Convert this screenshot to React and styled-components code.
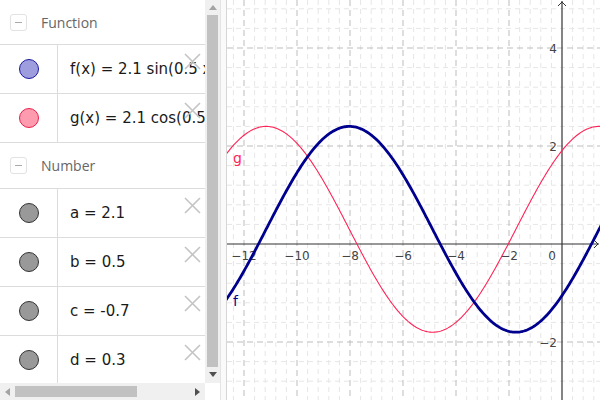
import React from "react";
import styled, { createGlobalStyle } from "styled-components";

const GlobalStyle = createGlobalStyle`
  html, body {
    margin: 0;
    padding: 0;
    overflow: hidden;
    background: #fff;
  }
`;

const Layout = styled.div`
  width: 600px;
  height: 400px;
  display: flex;
  font-family: "DejaVu Sans", sans-serif;
`;

const AlgebraPanel = styled.div`
  width: 220px;
  height: 400px;
  display: grid;
  grid-template-columns: 205px 15px;
  grid-template-rows: 383px 17px;
  flex-shrink: 0;
`;

const List = styled.div`
  overflow: hidden;
  display: flex;
  flex-direction: column;
`;

const GroupHeader = styled.div`
  height: ${(p) => p.height}px;
  flex-shrink: 0;
  display: flex;
  align-items: center;
  gap: 14px;
  padding-left: 10px;
  border-bottom: 1px solid #dcdcdc;
  box-sizing: border-box;
  color: #666;
  font-family: "Open Sans", sans-serif;
  font-size: 14px;
`;

const Collapse = styled.div`
  width: 15px;
  height: 15px;
  border: 1px solid #e2e2e2;
  border-radius: 3px;
  display: flex;
  align-items: center;
  justify-content: center;
  &::after {
    content: "";
    width: 7px;
    height: 1px;
    background: #aaa;
  }
`;

const Row = styled.div`
  position: relative;
  height: 49px;
  flex-shrink: 0;
  display: flex;
  border-bottom: 1px solid #dcdcdc;
  box-sizing: border-box;
`;

const MarkerCell = styled.div`
  width: 57px;
  flex-shrink: 0;
  border-right: 1px solid #dcdcdc;
  display: flex;
  align-items: center;
  justify-content: center;
`;

const Marker = styled.div`
  width: 18px;
  height: 18px;
  border-radius: 50%;
  background: ${(p) => p.fill};
  border: 1px solid ${(p) => p.stroke};
`;

const Expression = styled.div`
  display: flex;
  align-items: center;
  padding-left: 12px;
  white-space: nowrap;
  font-size: 15px;
  color: #1a1a1a;
`;

const DeleteButton = styled.svg`
  position: absolute;
  top: 8px;
  right: 4px;
`;

const VScroll = styled.div`
  background: #f0f0f0;
  display: flex;
  flex-direction: column;
  align-items: center;
`;

const HScroll = styled.div`
  background: #f0f0f0;
  display: flex;
  align-items: center;
`;

const ArrowBox = styled.div`
  width: 15px;
  height: 15px;
  flex-shrink: 0;
  display: flex;
  align-items: center;
  justify-content: center;
`;

const VThumb = styled.div`
  width: 11px;
  height: 352px;
  background: #c1c1c1;
`;

const HThumb = styled.div`
  height: 11px;
  width: 122px;
  background: #c1c1c1;
`;

const HSpacer = styled.div`
  flex: 1;
`;

const Corner = styled.div`
  background: #fff;
`;

const Splitter = styled.div`
  width: 5px;
  flex-shrink: 0;
  border-left: 1px solid #e4e4e4;
  border-right: 1px solid #d6d6d6;
  background: #fafafa;
`;

const GraphView = styled.div`
  flex: 1;
  height: 400px;
  background: #fff;
`;

const Triangle = ({ dir, color }) => {
  const pts = {
    up: "0,5 4,0 8,5",
    down: "0,0 8,0 4,5",
    left: "5,0 5,8 0,4",
    right: "0,0 0,8 5,4",
  }[dir];
  const vertical = dir === "up" || dir === "down";
  return (
    <svg width={vertical ? 8 : 5} height={vertical ? 5 : 8}>
      <polygon points={pts} fill={color} />
    </svg>
  );
};

const CloseIcon = () => (
  <DeleteButton width="17" height="17" viewBox="0 0 17 17">
    <path d="M1 1 L16 16 M16 1 L1 16" stroke="#c4c4c4" strokeWidth="1.6" />
  </DeleteButton>
);

const functions = [
  { expr: "f(x) = 2.1 sin(0.5 x - 0.7) + 0.3", fill: "#9e9ede", stroke: "#1a1aa0" },
  { expr: "g(x) = 2.1 cos(0.5 x - 0.7) + 0.3", fill: "#ff9bae", stroke: "#e8204d" },
];

const numbers = ["a = 2.1", "b = 0.5", "c = -0.7", "d = 0.3"];

const ItemRow = ({ expr, fill, stroke }) => (
  <Row>
    <MarkerCell>
      <Marker fill={fill} stroke={stroke} />
    </MarkerCell>
    <Expression>{expr}</Expression>
    <CloseIcon />
  </Row>
);

// graph coordinate system
const W = 373;
const H = 400;
const OX = 335;
const OY = 244;
const SX = 26.5;
const SY = 49;
const px = (x) => OX + x * SX;
const py = (y) => OY - y * SY;

const range = (from, to, step) => {
  const out = [];
  for (let v = from; v <= to + 1e-9; v += step) out.push(Math.round(v * 10) / 10);
  return out;
};

const curve = (fn) => {
  let d = "";
  for (let i = -2; i <= W + 2; i += 1) {
    const x = (i - OX) / SX;
    d += `${i === -2 ? "M" : "L"}${i} ${py(fn(x)).toFixed(2)} `;
  }
  return d;
};

const f = (x) => 2.1 * Math.sin(0.5 * x - 0.7) + 0.3;
const g = (x) => 2.1 * Math.cos(0.5 * x - 0.7) + 0.3;

const Graph = () => {
  const xs = range(-14, 2, 0.4);
  const ys = range(-4, 6, 0.4);
  const isMajor = (v) => Math.abs(v / 2 - Math.round(v / 2)) < 1e-6;
  return (
    <svg width={W} height={H} style={{ display: "block" }}>
      {xs.filter((v) => !isMajor(v)).map((v) => (
        <line key={"mx" + v} x1={px(v)} x2={px(v)} y1={0} y2={H} stroke="#e6e6e6" strokeDasharray="5 4" />
      ))}
      {ys.filter((v) => !isMajor(v)).map((v) => (
        <line key={"my" + v} y1={py(v)} y2={py(v)} x1={0} x2={W} stroke="#e6e6e6" strokeDasharray="5 4" />
      ))}
      {xs.filter((v) => isMajor(v) && v !== 0).map((v) => (
        <line key={"Mx" + v} x1={px(v)} x2={px(v)} y1={0} y2={H} stroke="#bdbdbd" strokeDasharray="6 4" />
      ))}
      {ys.filter((v) => isMajor(v) && v !== 0).map((v) => (
        <line key={"My" + v} y1={py(v)} y2={py(v)} x1={0} x2={W} stroke="#bdbdbd" strokeDasharray="6 4" />
      ))}

      <line x1={0} x2={W - 1} y1={OY} y2={OY} stroke="#333" strokeWidth="1.2" />
      <line x1={OX} x2={OX} y1={1} y2={H} stroke="#333" strokeWidth="1.2" />
      <path d={`M${OX - 4} ${6} L${OX} 2 L${OX + 4} 6`} fill="none" stroke="#333" />
      <path d={`M${W - 6} ${OY - 4} L${W - 2} ${OY} L${W - 6} ${OY + 4}`} fill="none" stroke="#333" />

      <g fontFamily="DejaVu Sans, sans-serif" fontSize="12" fill="#444">
        {[-12, -10, -8, -6, -4, -2].map((v) => (
          <text key={"lx" + v} x={px(v)} y={OY + 16} textAnchor="middle">
            {"\u2212" + Math.abs(v)}
          </text>
        ))}
        <text x={OX - 6} y={OY + 16} textAnchor="end">0</text>
        {[4, 2, -2].map((v) => (
          <text key={"ly" + v} x={OX - 5} y={py(v) + 5} textAnchor="end">
            {v < 0 ? "\u2212" + Math.abs(v) : v}
          </text>
        ))}
      </g>

      <path d={curve(g)} fill="none" stroke="#ff2457" strokeWidth="1.1" />
      <path d={curve(f)} fill="none" stroke="#00008f" strokeWidth="2.8" />

      <text x={6} y={163} fontFamily="DejaVu Sans, sans-serif" fontSize="14" fill="#ff2457">g</text>
      <text x={6} y={306} fontFamily="DejaVu Sans, sans-serif" fontSize="14" fill="#00008f">f</text>
    </svg>
  );
};

export default function App() {
  return (
    <>
      <GlobalStyle />
      <Layout>
        <AlgebraPanel>
          <List>
            <GroupHeader height={45}>
              <Collapse />
              Function
            </GroupHeader>
            {functions.map((item) => (
              <ItemRow key={item.expr} {...item} />
            ))}
            <GroupHeader height={46}>
              <Collapse />
              Number
            </GroupHeader>
            {numbers.map((expr) => (
              <ItemRow key={expr} expr={expr} fill="#999" stroke="#333" />
            ))}
          </List>
          <VScroll>
            <ArrowBox>
              <Triangle dir="up" color="#a3a3a3" />
            </ArrowBox>
            <VThumb />
            <ArrowBox>
              <Triangle dir="down" color="#505050" />
            </ArrowBox>
          </VScroll>
          <HScroll>
            <ArrowBox>
              <Triangle dir="left" color="#a3a3a3" />
            </ArrowBox>
            <HThumb />
            <HSpacer />
            <ArrowBox>
              <Triangle dir="right" color="#505050" />
            </ArrowBox>
          </HScroll>
          <Corner />
        </AlgebraPanel>
        <Splitter />
        <GraphView>
          <Graph />
        </GraphView>
      </Layout>
    </>
  );
}
